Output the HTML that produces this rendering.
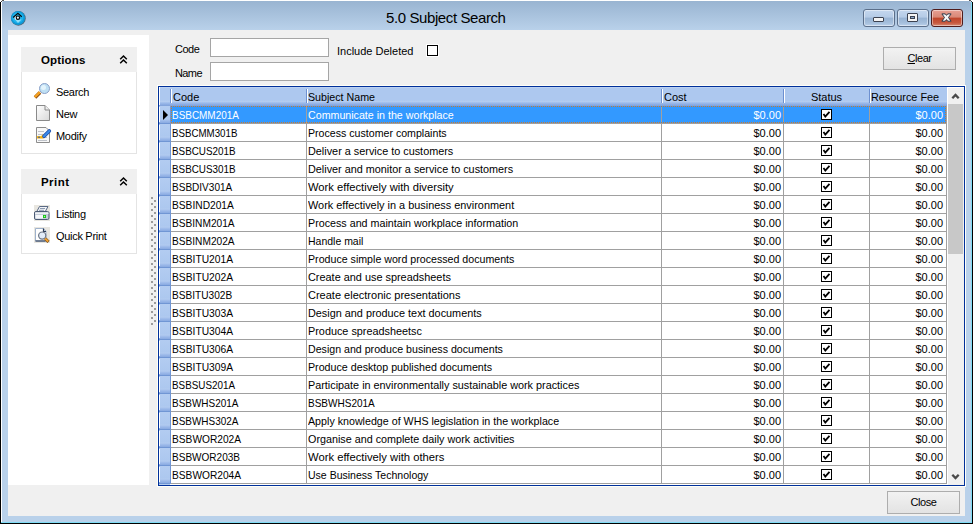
<!DOCTYPE html>
<html><head><meta charset="utf-8"><style>
*{margin:0;padding:0;box-sizing:border-box}
html,body{width:973px;height:524px;overflow:hidden;background:#fff;font-family:"Liberation Sans",sans-serif;font-size:11px;color:#000}
.a{position:absolute}
.t{position:absolute;white-space:pre;line-height:13px}
</style></head><body>
<div class="a" style="left:0;top:2px;width:1px;height:522px;background:#000"></div>
<div class="a" style="left:972px;top:2px;width:1px;height:522px;background:#000"></div>
<div class="a" style="left:0;top:523px;width:973px;height:1px;background:#000"></div>
<div class="a" style="left:2px;top:0;width:2px;height:1px;background:#555"></div>
<div class="a" style="left:1px;top:1px;width:1px;height:1px;background:#444"></div>
<div class="a" style="left:969px;top:0;width:2px;height:1px;background:#555"></div>
<div class="a" style="left:971px;top:1px;width:1px;height:1px;background:#444"></div>
<div class="a" style="left:1px;top:2px;width:1px;height:521px;background:#fff"></div>
<div class="a" style="left:971px;top:2px;width:1px;height:521px;background:#7fdcf5"></div>
<div class="a" style="left:1px;top:522px;width:971px;height:1px;background:#7fdcf5"></div>
<div class="a" style="left:2px;top:1px;width:969px;height:521px;background:#b9d1ea;border-radius:2px 2px 0 0"></div>
<div class="a" style="left:2px;top:1px;width:969px;height:29px;background:linear-gradient(#99b4d1,#b9d1ea);border-radius:2px 2px 0 0"></div>
<div class="t" style="left:386px;top:10px;font-size:15px;line-height:16px;letter-spacing:-0.4px;color:#000">5.0 Subject Search</div>
<svg class="a" style="left:10px;top:10px" width="17" height="17" viewBox="0 0 17 17"><circle cx="8.4" cy="8.4" r="7.3" fill="#2a3440" opacity=".7"/><circle cx="8" cy="8" r="7.1" fill="#0e9ad8"/><circle cx="7.8" cy="7.6" r="5.6" fill="#1eb2ec"/><path d="M5 9.6 L11.6 9.6 L8 13 Z" fill="#a8e4fa" opacity=".85"/><path d="M4.5 6.5 L7 6 L7 9.8 L4.8 9.6 Z" fill="#fff"/><path d="M3.1 7.5 L7.9 3.3 L11.8 6.8" fill="none" stroke="#0a0a0a" stroke-width="1.2"/><circle cx="7.9" cy="7.7" r="1.7" fill="#e8f6fc" stroke="#0a0a0a" stroke-width="1.2"/></svg>
<div class="a" style="left:863px;top:9px;width:32px;height:18px;border:1px solid #5b6f8a;border-radius:3px;background:linear-gradient(#c4d7ee 0%,#b5cbe6 45%,#98b3d3 50%,#a5bfdc 80%,#bad0ea 100%);box-shadow:inset 0 0 0 1px rgba(255,255,255,.45)"></div>
<div class="a" style="left:897px;top:9px;width:32px;height:18px;border:1px solid #5b6f8a;border-radius:3px;background:linear-gradient(#c4d7ee 0%,#b5cbe6 45%,#98b3d3 50%,#a5bfdc 80%,#bad0ea 100%);box-shadow:inset 0 0 0 1px rgba(255,255,255,.45)"></div>
<div class="a" style="left:931px;top:9px;width:32px;height:18px;border:1px solid #4f1c1c;border-radius:3px;background:linear-gradient(#e8a093 0%,#d98876 45%,#c0452a 50%,#c7583e 80%,#d68a73 100%);box-shadow:inset 0 0 0 1px rgba(255,255,255,.45)"></div>
<div class="a" style="left:873px;top:17px;width:11px;height:5px;background:#f4f4f4;border:1px solid #3c4250;border-radius:1px"></div>
<div class="a" style="left:907px;top:13px;width:11px;height:9px;background:#f4f4f4;border:1px solid #3c4250;border-radius:1px"></div>
<div class="a" style="left:910px;top:16px;width:5px;height:3px;background:#8da8c8;border:1px solid #3c4250"></div>
<svg class="a" style="left:940px;top:12px" width="14" height="11" viewBox="0 0 14 11"><path d="M1.9 1.9 L5.3 1.9 L6.5 3.4 L7.7 1.9 L11.1 1.9 L8.5 5.5 L11.1 9.2 L7.7 9.2 L6.5 7.6 L5.3 9.2 L1.9 9.2 L4.5 5.5 Z" fill="#f6f6f6" stroke="#2e3a4a" stroke-width="1" stroke-linejoin="round"/></svg>
<div class="a" style="left:8px;top:30px;width:957px;height:486px;background:#f0f0f0"></div>
<div class="a" style="left:8px;top:35px;width:141px;height:450px;background:#fff"></div>
<div class="a" style="left:21px;top:47px;width:116px;height:107px;background:#fff;border:1px solid #e4e4e4"></div>
<div class="a" style="left:21px;top:47px;width:116px;height:25px;background:#f0f0f0"></div>
<div class="t" style="left:41px;top:54px;font-weight:bold;font-size:11.5px;letter-spacing:0.15px">Options</div>
<svg class="a" style="left:119px;top:54px" width="9" height="11" viewBox="0 0 9 11"><path d="M1.2 5.2 L4.5 2 L7.8 5.2 M1.2 9.2 L4.5 6 L7.8 9.2" fill="none" stroke="#000" stroke-width="1.5"/></svg>
<div class="a" style="left:21px;top:169px;width:116px;height:85px;background:#fff;border:1px solid #e4e4e4"></div>
<div class="a" style="left:21px;top:169px;width:116px;height:25px;background:#f0f0f0"></div>
<div class="t" style="left:41px;top:176px;font-weight:bold;font-size:11.5px;letter-spacing:0.45px">Print</div>
<svg class="a" style="left:119px;top:176px" width="9" height="11" viewBox="0 0 9 11"><path d="M1.2 5.2 L4.5 2 L7.8 5.2 M1.2 9.2 L4.5 6 L7.8 9.2" fill="none" stroke="#000" stroke-width="1.5"/></svg>
<div class="t" style="left:56px;top:86px;letter-spacing:-0.3px">Search</div>
<div class="t" style="left:56px;top:108px;letter-spacing:-0.3px">New</div>
<div class="t" style="left:56px;top:130px;letter-spacing:-0.3px">Modify</div>
<div class="t" style="left:56px;top:208px;letter-spacing:-0.3px">Listing</div>
<div class="t" style="left:56px;top:230px;letter-spacing:-0.3px">Quick Print</div>
<svg class="a" style="left:33px;top:83px" width="18" height="17" viewBox="0 0 18 17"><path d="M2 14.5 L7 9.5" stroke="#8a4a10" stroke-width="3.6" stroke-linecap="butt"/><path d="M1.8 14.2 L6.8 9.2" stroke="#f4a020" stroke-width="2.4" stroke-linecap="butt"/><circle cx="11.5" cy="5.5" r="5" fill="#bfe0f4" stroke="#8aa0c8" stroke-width="1"/><circle cx="10.5" cy="4.5" r="2.5" fill="#e4f4fc"/></svg>
<svg class="a" style="left:36px;top:105px" width="14" height="16" viewBox="0 0 14 16"><defs><linearGradient id="pg" x1="0" y1="0" x2="1" y2="1"><stop offset="0" stop-color="#fff"/><stop offset="1" stop-color="#d8d8d8"/></linearGradient></defs><path d="M0.5 0.5 H9 L13.5 5 V15.5 H0.5 Z" fill="url(#pg)" stroke="#8a8a8a"/><path d="M9 0.5 V5 H13.5" fill="#eee" stroke="#8a8a8a"/></svg>
<svg class="a" style="left:33px;top:124px" width="20" height="22" viewBox="0 0 20 22"><path d="M3.5 3.5 H13 L16.5 7 V18.5 H3.5 Z" fill="#f8f8f8" stroke="#8c8c8c"/><path d="M5 7.5 H11 M5 10.5 H10 M5 16.5 H14 M11 13.5 H14" stroke="#b8bcc4" stroke-width="0.9"/><path d="M4 12 H8.5 L10 10 L11.5 11.5 L10.5 14.5 H4 Z" fill="#f6b010"/><path d="M4 12 H8 L9.5 11 V12.5 H4 Z" fill="#fcd040"/><rect x="5" y="12.7" width="2" height="1" fill="#3050a0"/><path d="M11 12.3 L16.3 7" stroke="#1848a8" stroke-width="3.6" stroke-linecap="round"/><path d="M11 12.3 L16.3 7" stroke="#3a8ae8" stroke-width="2.2" stroke-linecap="round"/></svg>
<svg class="a" style="left:32px;top:203px" width="20" height="20" viewBox="0 0 20 20"><rect x="2" y="2" width="16" height="16" fill="#e8e6e0"/><path d="M7.5 3.5 H16 L13 9 H4.5 Z" fill="#f2f4f8" stroke="#5a6a84" stroke-width="1"/><path d="M8 5.5 H13 M7 7.3 H12" stroke="#8090a8" stroke-width="0.9"/><rect x="2.5" y="8.5" width="14.5" height="8" rx="1.5" fill="#c4ccd8" stroke="#4a5a74"/><rect x="3" y="9.5" width="13.5" height="1.5" fill="#eef0f4"/><path d="M3.5 12 H11 V15.5 H3.5 Z" fill="#f4f6fa"/><rect x="11" y="12" width="3" height="3" fill="#18c018"/><circle cx="12.5" cy="13.5" r="0.7" fill="#a0ffa0"/></svg>
<svg class="a" style="left:32px;top:225px" width="20" height="20" viewBox="0 0 20 20"><rect x="2" y="2" width="16" height="16" fill="#e8e6e0"/><path d="M3.5 3.5 H11.5 L14 6 V16 H3.5 Z" fill="#fff" stroke="#9fb2cc" stroke-width="1"/><path d="M3.5 16 H13.5" stroke="#40506a" stroke-width="1.3"/><path d="M11.5 3.5 V6.5 H14" fill="#d0d8e4" stroke="#2a3a54" stroke-width="1.2"/><circle cx="10.2" cy="10.6" r="3.6" fill="#e2ecf8" stroke="#6a7484" stroke-width="1.2"/><path d="M13.2 13.6 L16.5 16.8" stroke="#6a4010" stroke-width="3"/><path d="M13.1 13.5 L16.2 16.5" stroke="#f0a030" stroke-width="2"/></svg>
<div class="a" style="left:151px;top:197px;width:2px;height:2px;background:#9a9a9a"></div>
<div class="a" style="left:151px;top:203px;width:2px;height:2px;background:#9a9a9a"></div>
<div class="a" style="left:151px;top:209px;width:2px;height:2px;background:#9a9a9a"></div>
<div class="a" style="left:151px;top:215px;width:2px;height:2px;background:#9a9a9a"></div>
<div class="a" style="left:151px;top:221px;width:2px;height:2px;background:#9a9a9a"></div>
<div class="a" style="left:151px;top:227px;width:2px;height:2px;background:#9a9a9a"></div>
<div class="a" style="left:151px;top:233px;width:2px;height:2px;background:#9a9a9a"></div>
<div class="a" style="left:151px;top:239px;width:2px;height:2px;background:#9a9a9a"></div>
<div class="a" style="left:151px;top:245px;width:2px;height:2px;background:#9a9a9a"></div>
<div class="a" style="left:151px;top:251px;width:2px;height:2px;background:#9a9a9a"></div>
<div class="a" style="left:151px;top:257px;width:2px;height:2px;background:#9a9a9a"></div>
<div class="a" style="left:151px;top:263px;width:2px;height:2px;background:#9a9a9a"></div>
<div class="a" style="left:151px;top:269px;width:2px;height:2px;background:#9a9a9a"></div>
<div class="a" style="left:151px;top:275px;width:2px;height:2px;background:#9a9a9a"></div>
<div class="a" style="left:151px;top:281px;width:2px;height:2px;background:#9a9a9a"></div>
<div class="a" style="left:151px;top:287px;width:2px;height:2px;background:#9a9a9a"></div>
<div class="a" style="left:151px;top:293px;width:2px;height:2px;background:#9a9a9a"></div>
<div class="a" style="left:151px;top:299px;width:2px;height:2px;background:#9a9a9a"></div>
<div class="a" style="left:151px;top:305px;width:2px;height:2px;background:#9a9a9a"></div>
<div class="a" style="left:151px;top:311px;width:2px;height:2px;background:#9a9a9a"></div>
<div class="a" style="left:151px;top:317px;width:2px;height:2px;background:#9a9a9a"></div>
<div class="a" style="left:151px;top:323px;width:2px;height:2px;background:#9a9a9a"></div>
<div class="a" style="left:154px;top:200px;width:2px;height:2px;background:#9a9a9a"></div>
<div class="a" style="left:154px;top:206px;width:2px;height:2px;background:#9a9a9a"></div>
<div class="a" style="left:154px;top:212px;width:2px;height:2px;background:#9a9a9a"></div>
<div class="a" style="left:154px;top:218px;width:2px;height:2px;background:#9a9a9a"></div>
<div class="a" style="left:154px;top:224px;width:2px;height:2px;background:#9a9a9a"></div>
<div class="a" style="left:154px;top:230px;width:2px;height:2px;background:#9a9a9a"></div>
<div class="a" style="left:154px;top:236px;width:2px;height:2px;background:#9a9a9a"></div>
<div class="a" style="left:154px;top:242px;width:2px;height:2px;background:#9a9a9a"></div>
<div class="a" style="left:154px;top:248px;width:2px;height:2px;background:#9a9a9a"></div>
<div class="a" style="left:154px;top:254px;width:2px;height:2px;background:#9a9a9a"></div>
<div class="a" style="left:154px;top:260px;width:2px;height:2px;background:#9a9a9a"></div>
<div class="a" style="left:154px;top:266px;width:2px;height:2px;background:#9a9a9a"></div>
<div class="a" style="left:154px;top:272px;width:2px;height:2px;background:#9a9a9a"></div>
<div class="a" style="left:154px;top:278px;width:2px;height:2px;background:#9a9a9a"></div>
<div class="a" style="left:154px;top:284px;width:2px;height:2px;background:#9a9a9a"></div>
<div class="a" style="left:154px;top:290px;width:2px;height:2px;background:#9a9a9a"></div>
<div class="a" style="left:154px;top:296px;width:2px;height:2px;background:#9a9a9a"></div>
<div class="a" style="left:154px;top:302px;width:2px;height:2px;background:#9a9a9a"></div>
<div class="a" style="left:154px;top:308px;width:2px;height:2px;background:#9a9a9a"></div>
<div class="a" style="left:154px;top:314px;width:2px;height:2px;background:#9a9a9a"></div>
<div class="a" style="left:154px;top:320px;width:2px;height:2px;background:#9a9a9a"></div>
<div class="t" style="left:175px;top:43px;letter-spacing:-0.5px">Code</div>
<div class="t" style="left:175px;top:67px;letter-spacing:-0.6px">Name</div>
<div class="a" style="left:210px;top:38px;width:119px;height:19px;background:#fff;border:1px solid #a5a5a5"></div>
<div class="a" style="left:210px;top:62px;width:119px;height:19px;background:#fff;border:1px solid #a5a5a5"></div>
<div class="t" style="left:337px;top:45px">Include Deleted</div>
<div class="a" style="left:426px;top:44px;width:13px;height:13px;background:#fff"></div>
<div class="a" style="left:427px;top:45px;width:11px;height:11px;background:#fff;border:1px solid #000"></div>
<div class="a" style="left:883px;top:47px;width:73px;height:23px;border:1px solid #adadad;background:linear-gradient(#f2f2f2,#e3e3e3)"></div>
<div class="t" style="left:883px;top:52px;width:73px;text-align:center;letter-spacing:-0.45px"><u>C</u>lear</div>
<div class="a" style="left:887px;top:491px;width:73px;height:23px;border:1px solid #adadad;background:linear-gradient(#f2f2f2,#e3e3e3)"></div>
<div class="t" style="left:887px;top:496px;width:73px;text-align:center;letter-spacing:-0.45px">Close</div>
<div class="a" style="left:157px;top:85px;width:809px;height:402px;background:#fffff8"></div>
<div class="a" style="left:158px;top:86px;width:807px;height:400px;background:#fff;border:1px solid #00309a"></div>
<div class="a" style="left:159px;top:87px;width:788px;height:18px;background:linear-gradient(#c2d6f4 0px,#adc8ef 1.5px,#adc8ef 13px,#b4ccf0 14.5px,#9dbbea 16px,#87a8e0 18px)"></div>
<div class="a" style="left:159px;top:105px;width:788px;height:1px;background:#84a5dc"></div>
<div class="a" style="left:159px;top:87px;width:1px;height:18px;background:#fff"></div>
<div class="a" style="left:170px;top:89px;width:1px;height:14px;background:#6d90d0"></div>
<div class="a" style="left:171px;top:89px;width:1px;height:14px;background:#fff"></div>
<div class="a" style="left:306px;top:89px;width:1px;height:14px;background:#6d90d0"></div>
<div class="a" style="left:307px;top:89px;width:1px;height:14px;background:#fff"></div>
<div class="a" style="left:661px;top:89px;width:1px;height:14px;background:#6d90d0"></div>
<div class="a" style="left:662px;top:89px;width:1px;height:14px;background:#fff"></div>
<div class="a" style="left:783px;top:89px;width:1px;height:14px;background:#6d90d0"></div>
<div class="a" style="left:784px;top:89px;width:1px;height:14px;background:#fff"></div>
<div class="a" style="left:869px;top:89px;width:1px;height:14px;background:#6d90d0"></div>
<div class="a" style="left:870px;top:89px;width:1px;height:14px;background:#fff"></div>
<div class="t" style="left:173px;top:91px">Code</div>
<div class="t" style="left:308px;top:91px;transform:scaleX(0.97);transform-origin:0 0">Subject Name</div>
<div class="t" style="left:664px;top:91px">Cost</div>
<div class="t" style="left:784px;top:91px;width:85px;text-align:center">Status</div>
<div class="t" style="left:871px;top:91px;transform:scaleX(0.985);transform-origin:0 0">Resource Fee</div>
<div class="a" style="left:159px;top:106px;width:11px;height:17px;background:linear-gradient(#b3ccf1 0px,#adc8ef 12px,#b2cbf0 13px,#9ab8e9 15px,#89aae1 17px)"></div>
<div class="a" style="left:159px;top:107px;width:1px;height:15px;background:#fff"></div>
<div class="a" style="left:159px;top:123px;width:12px;height:1px;background:#7096d4"></div>
<div class="a" style="left:170px;top:106px;width:1px;height:17px;background:#7096d4"></div>
<div class="a" style="left:171px;top:106px;width:776px;height:17px;background:#3399ff"></div>
<svg class="a" style="left:163px;top:110px" width="5" height="10" viewBox="0 0 5 10"><path d="M0 0 L5 5 L0 10 Z" fill="#000"/></svg>
<div class="a" style="left:171px;top:123px;width:776px;height:1px;background:#a0a0a0"></div>
<div class="a" style="left:306px;top:106px;width:1px;height:18px;background:#a0a0a0"></div>
<div class="a" style="left:661px;top:106px;width:1px;height:18px;background:#a0a0a0"></div>
<div class="a" style="left:783px;top:106px;width:1px;height:18px;background:#a0a0a0"></div>
<div class="a" style="left:869px;top:106px;width:1px;height:18px;background:#a0a0a0"></div>
<div class="a" style="left:946px;top:106px;width:1px;height:18px;background:#a0a0a0"></div>
<div class="t" style="left:172px;top:109px;color:#fff;transform:scaleX(0.904);transform-origin:0 0">BSBCMM201A</div>
<div class="t" style="left:308px;top:109px;color:#fff;transform:scaleX(0.969);transform-origin:0 0">Communicate in the workplace</div>
<div class="t" style="left:661px;top:109px;width:120px;text-align:right;color:#fff">$0.00</div>
<div class="t" style="left:869px;top:109px;width:74px;text-align:right;color:#fff">$0.00</div>
<svg class="a" style="left:821px;top:109px" width="11" height="11" viewBox="0 0 11 11"><rect x="0.5" y="0.5" width="10" height="10" fill="#fff" stroke="#000"/><path d="M2.5 5 L4.3 7.5 L8.5 2.8" fill="none" stroke="#000" stroke-width="1.8"/></svg>
<div class="a" style="left:171px;top:106px;width:776px;height:1px;background:repeating-linear-gradient(90deg,#c87a30 0 1px,transparent 1px 2px)"></div>
<div class="a" style="left:171px;top:122px;width:776px;height:1px;background:repeating-linear-gradient(90deg,#c87a30 0 1px,transparent 1px 2px)"></div>
<div class="a" style="left:171px;top:106px;width:1px;height:17px;background:repeating-linear-gradient(180deg,#c87a30 0 1px,transparent 1px 2px)"></div>
<div class="a" style="left:945px;top:106px;width:1px;height:17px;background:repeating-linear-gradient(180deg,#c87a30 0 1px,transparent 1px 2px)"></div>
<div class="a" style="left:159px;top:124px;width:11px;height:17px;background:linear-gradient(#b3ccf1 0px,#adc8ef 12px,#b2cbf0 13px,#9ab8e9 15px,#89aae1 17px)"></div>
<div class="a" style="left:159px;top:125px;width:1px;height:15px;background:#fff"></div>
<div class="a" style="left:159px;top:141px;width:12px;height:1px;background:#7096d4"></div>
<div class="a" style="left:170px;top:124px;width:1px;height:17px;background:#7096d4"></div>
<div class="a" style="left:171px;top:141px;width:776px;height:1px;background:#a0a0a0"></div>
<div class="a" style="left:306px;top:124px;width:1px;height:18px;background:#a0a0a0"></div>
<div class="a" style="left:661px;top:124px;width:1px;height:18px;background:#a0a0a0"></div>
<div class="a" style="left:783px;top:124px;width:1px;height:18px;background:#a0a0a0"></div>
<div class="a" style="left:869px;top:124px;width:1px;height:18px;background:#a0a0a0"></div>
<div class="a" style="left:946px;top:124px;width:1px;height:18px;background:#a0a0a0"></div>
<div class="t" style="left:172px;top:127px;color:#000;transform:scaleX(0.884);transform-origin:0 0">BSBCMM301B</div>
<div class="t" style="left:308px;top:127px;color:#000;transform:scaleX(0.965);transform-origin:0 0">Process customer complaints</div>
<div class="t" style="left:661px;top:127px;width:120px;text-align:right;color:#000">$0.00</div>
<div class="t" style="left:869px;top:127px;width:74px;text-align:right;color:#000">$0.00</div>
<svg class="a" style="left:821px;top:127px" width="11" height="11" viewBox="0 0 11 11"><rect x="0.5" y="0.5" width="10" height="10" fill="#fff" stroke="#000"/><path d="M2.5 5 L4.3 7.5 L8.5 2.8" fill="none" stroke="#000" stroke-width="1.8"/></svg>
<div class="a" style="left:159px;top:142px;width:11px;height:17px;background:linear-gradient(#b3ccf1 0px,#adc8ef 12px,#b2cbf0 13px,#9ab8e9 15px,#89aae1 17px)"></div>
<div class="a" style="left:159px;top:143px;width:1px;height:15px;background:#fff"></div>
<div class="a" style="left:159px;top:159px;width:12px;height:1px;background:#7096d4"></div>
<div class="a" style="left:170px;top:142px;width:1px;height:17px;background:#7096d4"></div>
<div class="a" style="left:171px;top:159px;width:776px;height:1px;background:#a0a0a0"></div>
<div class="a" style="left:306px;top:142px;width:1px;height:18px;background:#a0a0a0"></div>
<div class="a" style="left:661px;top:142px;width:1px;height:18px;background:#a0a0a0"></div>
<div class="a" style="left:783px;top:142px;width:1px;height:18px;background:#a0a0a0"></div>
<div class="a" style="left:869px;top:142px;width:1px;height:18px;background:#a0a0a0"></div>
<div class="a" style="left:946px;top:142px;width:1px;height:18px;background:#a0a0a0"></div>
<div class="t" style="left:172px;top:145px;color:#000;transform:scaleX(0.896);transform-origin:0 0">BSBCUS201B</div>
<div class="t" style="left:308px;top:145px;color:#000;transform:scaleX(0.986);transform-origin:0 0">Deliver a service to customers</div>
<div class="t" style="left:661px;top:145px;width:120px;text-align:right;color:#000">$0.00</div>
<div class="t" style="left:869px;top:145px;width:74px;text-align:right;color:#000">$0.00</div>
<svg class="a" style="left:821px;top:145px" width="11" height="11" viewBox="0 0 11 11"><rect x="0.5" y="0.5" width="10" height="10" fill="#fff" stroke="#000"/><path d="M2.5 5 L4.3 7.5 L8.5 2.8" fill="none" stroke="#000" stroke-width="1.8"/></svg>
<div class="a" style="left:159px;top:160px;width:11px;height:17px;background:linear-gradient(#b3ccf1 0px,#adc8ef 12px,#b2cbf0 13px,#9ab8e9 15px,#89aae1 17px)"></div>
<div class="a" style="left:159px;top:161px;width:1px;height:15px;background:#fff"></div>
<div class="a" style="left:159px;top:177px;width:12px;height:1px;background:#7096d4"></div>
<div class="a" style="left:170px;top:160px;width:1px;height:17px;background:#7096d4"></div>
<div class="a" style="left:171px;top:177px;width:776px;height:1px;background:#a0a0a0"></div>
<div class="a" style="left:306px;top:160px;width:1px;height:18px;background:#a0a0a0"></div>
<div class="a" style="left:661px;top:160px;width:1px;height:18px;background:#a0a0a0"></div>
<div class="a" style="left:783px;top:160px;width:1px;height:18px;background:#a0a0a0"></div>
<div class="a" style="left:869px;top:160px;width:1px;height:18px;background:#a0a0a0"></div>
<div class="a" style="left:946px;top:160px;width:1px;height:18px;background:#a0a0a0"></div>
<div class="t" style="left:172px;top:163px;color:#000;transform:scaleX(0.896);transform-origin:0 0">BSBCUS301B</div>
<div class="t" style="left:308px;top:163px;color:#000;transform:scaleX(0.984);transform-origin:0 0">Deliver and monitor a service to customers</div>
<div class="t" style="left:661px;top:163px;width:120px;text-align:right;color:#000">$0.00</div>
<div class="t" style="left:869px;top:163px;width:74px;text-align:right;color:#000">$0.00</div>
<svg class="a" style="left:821px;top:163px" width="11" height="11" viewBox="0 0 11 11"><rect x="0.5" y="0.5" width="10" height="10" fill="#fff" stroke="#000"/><path d="M2.5 5 L4.3 7.5 L8.5 2.8" fill="none" stroke="#000" stroke-width="1.8"/></svg>
<div class="a" style="left:159px;top:178px;width:11px;height:17px;background:linear-gradient(#b3ccf1 0px,#adc8ef 12px,#b2cbf0 13px,#9ab8e9 15px,#89aae1 17px)"></div>
<div class="a" style="left:159px;top:179px;width:1px;height:15px;background:#fff"></div>
<div class="a" style="left:159px;top:195px;width:12px;height:1px;background:#7096d4"></div>
<div class="a" style="left:170px;top:178px;width:1px;height:17px;background:#7096d4"></div>
<div class="a" style="left:171px;top:195px;width:776px;height:1px;background:#a0a0a0"></div>
<div class="a" style="left:306px;top:178px;width:1px;height:18px;background:#a0a0a0"></div>
<div class="a" style="left:661px;top:178px;width:1px;height:18px;background:#a0a0a0"></div>
<div class="a" style="left:783px;top:178px;width:1px;height:18px;background:#a0a0a0"></div>
<div class="a" style="left:869px;top:178px;width:1px;height:18px;background:#a0a0a0"></div>
<div class="a" style="left:946px;top:178px;width:1px;height:18px;background:#a0a0a0"></div>
<div class="t" style="left:172px;top:181px;color:#000;transform:scaleX(0.912);transform-origin:0 0">BSBDIV301A</div>
<div class="t" style="left:308px;top:181px;color:#000;transform:scaleX(1.017);transform-origin:0 0">Work effectively with diversity</div>
<div class="t" style="left:661px;top:181px;width:120px;text-align:right;color:#000">$0.00</div>
<div class="t" style="left:869px;top:181px;width:74px;text-align:right;color:#000">$0.00</div>
<svg class="a" style="left:821px;top:181px" width="11" height="11" viewBox="0 0 11 11"><rect x="0.5" y="0.5" width="10" height="10" fill="#fff" stroke="#000"/><path d="M2.5 5 L4.3 7.5 L8.5 2.8" fill="none" stroke="#000" stroke-width="1.8"/></svg>
<div class="a" style="left:159px;top:196px;width:11px;height:17px;background:linear-gradient(#b3ccf1 0px,#adc8ef 12px,#b2cbf0 13px,#9ab8e9 15px,#89aae1 17px)"></div>
<div class="a" style="left:159px;top:197px;width:1px;height:15px;background:#fff"></div>
<div class="a" style="left:159px;top:213px;width:12px;height:1px;background:#7096d4"></div>
<div class="a" style="left:170px;top:196px;width:1px;height:17px;background:#7096d4"></div>
<div class="a" style="left:171px;top:213px;width:776px;height:1px;background:#a0a0a0"></div>
<div class="a" style="left:306px;top:196px;width:1px;height:18px;background:#a0a0a0"></div>
<div class="a" style="left:661px;top:196px;width:1px;height:18px;background:#a0a0a0"></div>
<div class="a" style="left:783px;top:196px;width:1px;height:18px;background:#a0a0a0"></div>
<div class="a" style="left:869px;top:196px;width:1px;height:18px;background:#a0a0a0"></div>
<div class="a" style="left:946px;top:196px;width:1px;height:18px;background:#a0a0a0"></div>
<div class="t" style="left:172px;top:199px;color:#000;transform:scaleX(0.928);transform-origin:0 0">BSBIND201A</div>
<div class="t" style="left:308px;top:199px;color:#000;transform:scaleX(0.991);transform-origin:0 0">Work effectively in a business environment</div>
<div class="t" style="left:661px;top:199px;width:120px;text-align:right;color:#000">$0.00</div>
<div class="t" style="left:869px;top:199px;width:74px;text-align:right;color:#000">$0.00</div>
<svg class="a" style="left:821px;top:199px" width="11" height="11" viewBox="0 0 11 11"><rect x="0.5" y="0.5" width="10" height="10" fill="#fff" stroke="#000"/><path d="M2.5 5 L4.3 7.5 L8.5 2.8" fill="none" stroke="#000" stroke-width="1.8"/></svg>
<div class="a" style="left:159px;top:214px;width:11px;height:17px;background:linear-gradient(#b3ccf1 0px,#adc8ef 12px,#b2cbf0 13px,#9ab8e9 15px,#89aae1 17px)"></div>
<div class="a" style="left:159px;top:215px;width:1px;height:15px;background:#fff"></div>
<div class="a" style="left:159px;top:231px;width:12px;height:1px;background:#7096d4"></div>
<div class="a" style="left:170px;top:214px;width:1px;height:17px;background:#7096d4"></div>
<div class="a" style="left:171px;top:231px;width:776px;height:1px;background:#a0a0a0"></div>
<div class="a" style="left:306px;top:214px;width:1px;height:18px;background:#a0a0a0"></div>
<div class="a" style="left:661px;top:214px;width:1px;height:18px;background:#a0a0a0"></div>
<div class="a" style="left:783px;top:214px;width:1px;height:18px;background:#a0a0a0"></div>
<div class="a" style="left:869px;top:214px;width:1px;height:18px;background:#a0a0a0"></div>
<div class="a" style="left:946px;top:214px;width:1px;height:18px;background:#a0a0a0"></div>
<div class="t" style="left:172px;top:217px;color:#000;transform:scaleX(0.922);transform-origin:0 0">BSBINM201A</div>
<div class="t" style="left:308px;top:217px;color:#000;transform:scaleX(0.974);transform-origin:0 0">Process and maintain workplace information</div>
<div class="t" style="left:661px;top:217px;width:120px;text-align:right;color:#000">$0.00</div>
<div class="t" style="left:869px;top:217px;width:74px;text-align:right;color:#000">$0.00</div>
<svg class="a" style="left:821px;top:217px" width="11" height="11" viewBox="0 0 11 11"><rect x="0.5" y="0.5" width="10" height="10" fill="#fff" stroke="#000"/><path d="M2.5 5 L4.3 7.5 L8.5 2.8" fill="none" stroke="#000" stroke-width="1.8"/></svg>
<div class="a" style="left:159px;top:232px;width:11px;height:17px;background:linear-gradient(#b3ccf1 0px,#adc8ef 12px,#b2cbf0 13px,#9ab8e9 15px,#89aae1 17px)"></div>
<div class="a" style="left:159px;top:233px;width:1px;height:15px;background:#fff"></div>
<div class="a" style="left:159px;top:249px;width:12px;height:1px;background:#7096d4"></div>
<div class="a" style="left:170px;top:232px;width:1px;height:17px;background:#7096d4"></div>
<div class="a" style="left:171px;top:249px;width:776px;height:1px;background:#a0a0a0"></div>
<div class="a" style="left:306px;top:232px;width:1px;height:18px;background:#a0a0a0"></div>
<div class="a" style="left:661px;top:232px;width:1px;height:18px;background:#a0a0a0"></div>
<div class="a" style="left:783px;top:232px;width:1px;height:18px;background:#a0a0a0"></div>
<div class="a" style="left:869px;top:232px;width:1px;height:18px;background:#a0a0a0"></div>
<div class="a" style="left:946px;top:232px;width:1px;height:18px;background:#a0a0a0"></div>
<div class="t" style="left:172px;top:235px;color:#000;transform:scaleX(0.922);transform-origin:0 0">BSBINM202A</div>
<div class="t" style="left:308px;top:235px;color:#000;transform:scaleX(0.953);transform-origin:0 0">Handle mail</div>
<div class="t" style="left:661px;top:235px;width:120px;text-align:right;color:#000">$0.00</div>
<div class="t" style="left:869px;top:235px;width:74px;text-align:right;color:#000">$0.00</div>
<svg class="a" style="left:821px;top:235px" width="11" height="11" viewBox="0 0 11 11"><rect x="0.5" y="0.5" width="10" height="10" fill="#fff" stroke="#000"/><path d="M2.5 5 L4.3 7.5 L8.5 2.8" fill="none" stroke="#000" stroke-width="1.8"/></svg>
<div class="a" style="left:159px;top:250px;width:11px;height:17px;background:linear-gradient(#b3ccf1 0px,#adc8ef 12px,#b2cbf0 13px,#9ab8e9 15px,#89aae1 17px)"></div>
<div class="a" style="left:159px;top:251px;width:1px;height:15px;background:#fff"></div>
<div class="a" style="left:159px;top:267px;width:12px;height:1px;background:#7096d4"></div>
<div class="a" style="left:170px;top:250px;width:1px;height:17px;background:#7096d4"></div>
<div class="a" style="left:171px;top:267px;width:776px;height:1px;background:#a0a0a0"></div>
<div class="a" style="left:306px;top:250px;width:1px;height:18px;background:#a0a0a0"></div>
<div class="a" style="left:661px;top:250px;width:1px;height:18px;background:#a0a0a0"></div>
<div class="a" style="left:783px;top:250px;width:1px;height:18px;background:#a0a0a0"></div>
<div class="a" style="left:869px;top:250px;width:1px;height:18px;background:#a0a0a0"></div>
<div class="a" style="left:946px;top:250px;width:1px;height:18px;background:#a0a0a0"></div>
<div class="t" style="left:172px;top:253px;color:#000;transform:scaleX(0.933);transform-origin:0 0">BSBITU201A</div>
<div class="t" style="left:308px;top:253px;color:#000;transform:scaleX(0.967);transform-origin:0 0">Produce simple word processed documents</div>
<div class="t" style="left:661px;top:253px;width:120px;text-align:right;color:#000">$0.00</div>
<div class="t" style="left:869px;top:253px;width:74px;text-align:right;color:#000">$0.00</div>
<svg class="a" style="left:821px;top:253px" width="11" height="11" viewBox="0 0 11 11"><rect x="0.5" y="0.5" width="10" height="10" fill="#fff" stroke="#000"/><path d="M2.5 5 L4.3 7.5 L8.5 2.8" fill="none" stroke="#000" stroke-width="1.8"/></svg>
<div class="a" style="left:159px;top:268px;width:11px;height:17px;background:linear-gradient(#b3ccf1 0px,#adc8ef 12px,#b2cbf0 13px,#9ab8e9 15px,#89aae1 17px)"></div>
<div class="a" style="left:159px;top:269px;width:1px;height:15px;background:#fff"></div>
<div class="a" style="left:159px;top:285px;width:12px;height:1px;background:#7096d4"></div>
<div class="a" style="left:170px;top:268px;width:1px;height:17px;background:#7096d4"></div>
<div class="a" style="left:171px;top:285px;width:776px;height:1px;background:#a0a0a0"></div>
<div class="a" style="left:306px;top:268px;width:1px;height:18px;background:#a0a0a0"></div>
<div class="a" style="left:661px;top:268px;width:1px;height:18px;background:#a0a0a0"></div>
<div class="a" style="left:783px;top:268px;width:1px;height:18px;background:#a0a0a0"></div>
<div class="a" style="left:869px;top:268px;width:1px;height:18px;background:#a0a0a0"></div>
<div class="a" style="left:946px;top:268px;width:1px;height:18px;background:#a0a0a0"></div>
<div class="t" style="left:172px;top:271px;color:#000;transform:scaleX(0.933);transform-origin:0 0">BSBITU202A</div>
<div class="t" style="left:308px;top:271px;color:#000;transform:scaleX(0.99);transform-origin:0 0">Create and use spreadsheets</div>
<div class="t" style="left:661px;top:271px;width:120px;text-align:right;color:#000">$0.00</div>
<div class="t" style="left:869px;top:271px;width:74px;text-align:right;color:#000">$0.00</div>
<svg class="a" style="left:821px;top:271px" width="11" height="11" viewBox="0 0 11 11"><rect x="0.5" y="0.5" width="10" height="10" fill="#fff" stroke="#000"/><path d="M2.5 5 L4.3 7.5 L8.5 2.8" fill="none" stroke="#000" stroke-width="1.8"/></svg>
<div class="a" style="left:159px;top:286px;width:11px;height:17px;background:linear-gradient(#b3ccf1 0px,#adc8ef 12px,#b2cbf0 13px,#9ab8e9 15px,#89aae1 17px)"></div>
<div class="a" style="left:159px;top:287px;width:1px;height:15px;background:#fff"></div>
<div class="a" style="left:159px;top:303px;width:12px;height:1px;background:#7096d4"></div>
<div class="a" style="left:170px;top:286px;width:1px;height:17px;background:#7096d4"></div>
<div class="a" style="left:171px;top:303px;width:776px;height:1px;background:#a0a0a0"></div>
<div class="a" style="left:306px;top:286px;width:1px;height:18px;background:#a0a0a0"></div>
<div class="a" style="left:661px;top:286px;width:1px;height:18px;background:#a0a0a0"></div>
<div class="a" style="left:783px;top:286px;width:1px;height:18px;background:#a0a0a0"></div>
<div class="a" style="left:869px;top:286px;width:1px;height:18px;background:#a0a0a0"></div>
<div class="a" style="left:946px;top:286px;width:1px;height:18px;background:#a0a0a0"></div>
<div class="t" style="left:172px;top:289px;color:#000;transform:scaleX(0.92);transform-origin:0 0">BSBITU302B</div>
<div class="t" style="left:308px;top:289px;color:#000;transform:scaleX(1.001);transform-origin:0 0">Create electronic presentations</div>
<div class="t" style="left:661px;top:289px;width:120px;text-align:right;color:#000">$0.00</div>
<div class="t" style="left:869px;top:289px;width:74px;text-align:right;color:#000">$0.00</div>
<svg class="a" style="left:821px;top:289px" width="11" height="11" viewBox="0 0 11 11"><rect x="0.5" y="0.5" width="10" height="10" fill="#fff" stroke="#000"/><path d="M2.5 5 L4.3 7.5 L8.5 2.8" fill="none" stroke="#000" stroke-width="1.8"/></svg>
<div class="a" style="left:159px;top:304px;width:11px;height:17px;background:linear-gradient(#b3ccf1 0px,#adc8ef 12px,#b2cbf0 13px,#9ab8e9 15px,#89aae1 17px)"></div>
<div class="a" style="left:159px;top:305px;width:1px;height:15px;background:#fff"></div>
<div class="a" style="left:159px;top:321px;width:12px;height:1px;background:#7096d4"></div>
<div class="a" style="left:170px;top:304px;width:1px;height:17px;background:#7096d4"></div>
<div class="a" style="left:171px;top:321px;width:776px;height:1px;background:#a0a0a0"></div>
<div class="a" style="left:306px;top:304px;width:1px;height:18px;background:#a0a0a0"></div>
<div class="a" style="left:661px;top:304px;width:1px;height:18px;background:#a0a0a0"></div>
<div class="a" style="left:783px;top:304px;width:1px;height:18px;background:#a0a0a0"></div>
<div class="a" style="left:869px;top:304px;width:1px;height:18px;background:#a0a0a0"></div>
<div class="a" style="left:946px;top:304px;width:1px;height:18px;background:#a0a0a0"></div>
<div class="t" style="left:172px;top:307px;color:#000;transform:scaleX(0.933);transform-origin:0 0">BSBITU303A</div>
<div class="t" style="left:308px;top:307px;color:#000;transform:scaleX(0.986);transform-origin:0 0">Design and produce text documents</div>
<div class="t" style="left:661px;top:307px;width:120px;text-align:right;color:#000">$0.00</div>
<div class="t" style="left:869px;top:307px;width:74px;text-align:right;color:#000">$0.00</div>
<svg class="a" style="left:821px;top:307px" width="11" height="11" viewBox="0 0 11 11"><rect x="0.5" y="0.5" width="10" height="10" fill="#fff" stroke="#000"/><path d="M2.5 5 L4.3 7.5 L8.5 2.8" fill="none" stroke="#000" stroke-width="1.8"/></svg>
<div class="a" style="left:159px;top:322px;width:11px;height:17px;background:linear-gradient(#b3ccf1 0px,#adc8ef 12px,#b2cbf0 13px,#9ab8e9 15px,#89aae1 17px)"></div>
<div class="a" style="left:159px;top:323px;width:1px;height:15px;background:#fff"></div>
<div class="a" style="left:159px;top:339px;width:12px;height:1px;background:#7096d4"></div>
<div class="a" style="left:170px;top:322px;width:1px;height:17px;background:#7096d4"></div>
<div class="a" style="left:171px;top:339px;width:776px;height:1px;background:#a0a0a0"></div>
<div class="a" style="left:306px;top:322px;width:1px;height:18px;background:#a0a0a0"></div>
<div class="a" style="left:661px;top:322px;width:1px;height:18px;background:#a0a0a0"></div>
<div class="a" style="left:783px;top:322px;width:1px;height:18px;background:#a0a0a0"></div>
<div class="a" style="left:869px;top:322px;width:1px;height:18px;background:#a0a0a0"></div>
<div class="a" style="left:946px;top:322px;width:1px;height:18px;background:#a0a0a0"></div>
<div class="t" style="left:172px;top:325px;color:#000;transform:scaleX(0.933);transform-origin:0 0">BSBITU304A</div>
<div class="t" style="left:308px;top:325px;color:#000;transform:scaleX(0.986);transform-origin:0 0">Produce spreadsheetsc</div>
<div class="t" style="left:661px;top:325px;width:120px;text-align:right;color:#000">$0.00</div>
<div class="t" style="left:869px;top:325px;width:74px;text-align:right;color:#000">$0.00</div>
<svg class="a" style="left:821px;top:325px" width="11" height="11" viewBox="0 0 11 11"><rect x="0.5" y="0.5" width="10" height="10" fill="#fff" stroke="#000"/><path d="M2.5 5 L4.3 7.5 L8.5 2.8" fill="none" stroke="#000" stroke-width="1.8"/></svg>
<div class="a" style="left:159px;top:340px;width:11px;height:17px;background:linear-gradient(#b3ccf1 0px,#adc8ef 12px,#b2cbf0 13px,#9ab8e9 15px,#89aae1 17px)"></div>
<div class="a" style="left:159px;top:341px;width:1px;height:15px;background:#fff"></div>
<div class="a" style="left:159px;top:357px;width:12px;height:1px;background:#7096d4"></div>
<div class="a" style="left:170px;top:340px;width:1px;height:17px;background:#7096d4"></div>
<div class="a" style="left:171px;top:357px;width:776px;height:1px;background:#a0a0a0"></div>
<div class="a" style="left:306px;top:340px;width:1px;height:18px;background:#a0a0a0"></div>
<div class="a" style="left:661px;top:340px;width:1px;height:18px;background:#a0a0a0"></div>
<div class="a" style="left:783px;top:340px;width:1px;height:18px;background:#a0a0a0"></div>
<div class="a" style="left:869px;top:340px;width:1px;height:18px;background:#a0a0a0"></div>
<div class="a" style="left:946px;top:340px;width:1px;height:18px;background:#a0a0a0"></div>
<div class="t" style="left:172px;top:343px;color:#000;transform:scaleX(0.933);transform-origin:0 0">BSBITU306A</div>
<div class="t" style="left:308px;top:343px;color:#000;transform:scaleX(0.966);transform-origin:0 0">Design and produce business documents</div>
<div class="t" style="left:661px;top:343px;width:120px;text-align:right;color:#000">$0.00</div>
<div class="t" style="left:869px;top:343px;width:74px;text-align:right;color:#000">$0.00</div>
<svg class="a" style="left:821px;top:343px" width="11" height="11" viewBox="0 0 11 11"><rect x="0.5" y="0.5" width="10" height="10" fill="#fff" stroke="#000"/><path d="M2.5 5 L4.3 7.5 L8.5 2.8" fill="none" stroke="#000" stroke-width="1.8"/></svg>
<div class="a" style="left:159px;top:358px;width:11px;height:17px;background:linear-gradient(#b3ccf1 0px,#adc8ef 12px,#b2cbf0 13px,#9ab8e9 15px,#89aae1 17px)"></div>
<div class="a" style="left:159px;top:359px;width:1px;height:15px;background:#fff"></div>
<div class="a" style="left:159px;top:375px;width:12px;height:1px;background:#7096d4"></div>
<div class="a" style="left:170px;top:358px;width:1px;height:17px;background:#7096d4"></div>
<div class="a" style="left:171px;top:375px;width:776px;height:1px;background:#a0a0a0"></div>
<div class="a" style="left:306px;top:358px;width:1px;height:18px;background:#a0a0a0"></div>
<div class="a" style="left:661px;top:358px;width:1px;height:18px;background:#a0a0a0"></div>
<div class="a" style="left:783px;top:358px;width:1px;height:18px;background:#a0a0a0"></div>
<div class="a" style="left:869px;top:358px;width:1px;height:18px;background:#a0a0a0"></div>
<div class="a" style="left:946px;top:358px;width:1px;height:18px;background:#a0a0a0"></div>
<div class="t" style="left:172px;top:361px;color:#000;transform:scaleX(0.933);transform-origin:0 0">BSBITU309A</div>
<div class="t" style="left:308px;top:361px;color:#000;transform:scaleX(0.971);transform-origin:0 0">Produce desktop published documents</div>
<div class="t" style="left:661px;top:361px;width:120px;text-align:right;color:#000">$0.00</div>
<div class="t" style="left:869px;top:361px;width:74px;text-align:right;color:#000">$0.00</div>
<svg class="a" style="left:821px;top:361px" width="11" height="11" viewBox="0 0 11 11"><rect x="0.5" y="0.5" width="10" height="10" fill="#fff" stroke="#000"/><path d="M2.5 5 L4.3 7.5 L8.5 2.8" fill="none" stroke="#000" stroke-width="1.8"/></svg>
<div class="a" style="left:159px;top:376px;width:11px;height:17px;background:linear-gradient(#b3ccf1 0px,#adc8ef 12px,#b2cbf0 13px,#9ab8e9 15px,#89aae1 17px)"></div>
<div class="a" style="left:159px;top:377px;width:1px;height:15px;background:#fff"></div>
<div class="a" style="left:159px;top:393px;width:12px;height:1px;background:#7096d4"></div>
<div class="a" style="left:170px;top:376px;width:1px;height:17px;background:#7096d4"></div>
<div class="a" style="left:171px;top:393px;width:776px;height:1px;background:#a0a0a0"></div>
<div class="a" style="left:306px;top:376px;width:1px;height:18px;background:#a0a0a0"></div>
<div class="a" style="left:661px;top:376px;width:1px;height:18px;background:#a0a0a0"></div>
<div class="a" style="left:783px;top:376px;width:1px;height:18px;background:#a0a0a0"></div>
<div class="a" style="left:869px;top:376px;width:1px;height:18px;background:#a0a0a0"></div>
<div class="a" style="left:946px;top:376px;width:1px;height:18px;background:#a0a0a0"></div>
<div class="t" style="left:172px;top:379px;color:#000;transform:scaleX(0.896);transform-origin:0 0">BSBSUS201A</div>
<div class="t" style="left:308px;top:379px;color:#000;transform:scaleX(0.984);transform-origin:0 0">Participate in environmentally sustainable work practices</div>
<div class="t" style="left:661px;top:379px;width:120px;text-align:right;color:#000">$0.00</div>
<div class="t" style="left:869px;top:379px;width:74px;text-align:right;color:#000">$0.00</div>
<svg class="a" style="left:821px;top:379px" width="11" height="11" viewBox="0 0 11 11"><rect x="0.5" y="0.5" width="10" height="10" fill="#fff" stroke="#000"/><path d="M2.5 5 L4.3 7.5 L8.5 2.8" fill="none" stroke="#000" stroke-width="1.8"/></svg>
<div class="a" style="left:159px;top:394px;width:11px;height:17px;background:linear-gradient(#b3ccf1 0px,#adc8ef 12px,#b2cbf0 13px,#9ab8e9 15px,#89aae1 17px)"></div>
<div class="a" style="left:159px;top:395px;width:1px;height:15px;background:#fff"></div>
<div class="a" style="left:159px;top:411px;width:12px;height:1px;background:#7096d4"></div>
<div class="a" style="left:170px;top:394px;width:1px;height:17px;background:#7096d4"></div>
<div class="a" style="left:171px;top:411px;width:776px;height:1px;background:#a0a0a0"></div>
<div class="a" style="left:306px;top:394px;width:1px;height:18px;background:#a0a0a0"></div>
<div class="a" style="left:661px;top:394px;width:1px;height:18px;background:#a0a0a0"></div>
<div class="a" style="left:783px;top:394px;width:1px;height:18px;background:#a0a0a0"></div>
<div class="a" style="left:869px;top:394px;width:1px;height:18px;background:#a0a0a0"></div>
<div class="a" style="left:946px;top:394px;width:1px;height:18px;background:#a0a0a0"></div>
<div class="t" style="left:172px;top:397px;color:#000;transform:scaleX(0.906);transform-origin:0 0">BSBWHS201A</div>
<div class="t" style="left:308px;top:397px;color:#000;transform:scaleX(0.91);transform-origin:0 0">BSBWHS201A</div>
<div class="t" style="left:661px;top:397px;width:120px;text-align:right;color:#000">$0.00</div>
<div class="t" style="left:869px;top:397px;width:74px;text-align:right;color:#000">$0.00</div>
<svg class="a" style="left:821px;top:397px" width="11" height="11" viewBox="0 0 11 11"><rect x="0.5" y="0.5" width="10" height="10" fill="#fff" stroke="#000"/><path d="M2.5 5 L4.3 7.5 L8.5 2.8" fill="none" stroke="#000" stroke-width="1.8"/></svg>
<div class="a" style="left:159px;top:412px;width:11px;height:17px;background:linear-gradient(#b3ccf1 0px,#adc8ef 12px,#b2cbf0 13px,#9ab8e9 15px,#89aae1 17px)"></div>
<div class="a" style="left:159px;top:413px;width:1px;height:15px;background:#fff"></div>
<div class="a" style="left:159px;top:429px;width:12px;height:1px;background:#7096d4"></div>
<div class="a" style="left:170px;top:412px;width:1px;height:17px;background:#7096d4"></div>
<div class="a" style="left:171px;top:429px;width:776px;height:1px;background:#a0a0a0"></div>
<div class="a" style="left:306px;top:412px;width:1px;height:18px;background:#a0a0a0"></div>
<div class="a" style="left:661px;top:412px;width:1px;height:18px;background:#a0a0a0"></div>
<div class="a" style="left:783px;top:412px;width:1px;height:18px;background:#a0a0a0"></div>
<div class="a" style="left:869px;top:412px;width:1px;height:18px;background:#a0a0a0"></div>
<div class="a" style="left:946px;top:412px;width:1px;height:18px;background:#a0a0a0"></div>
<div class="t" style="left:172px;top:415px;color:#000;transform:scaleX(0.906);transform-origin:0 0">BSBWHS302A</div>
<div class="t" style="left:308px;top:415px;color:#000;transform:scaleX(0.971);transform-origin:0 0">Apply knowledge of WHS legislation in the workplace</div>
<div class="t" style="left:661px;top:415px;width:120px;text-align:right;color:#000">$0.00</div>
<div class="t" style="left:869px;top:415px;width:74px;text-align:right;color:#000">$0.00</div>
<svg class="a" style="left:821px;top:415px" width="11" height="11" viewBox="0 0 11 11"><rect x="0.5" y="0.5" width="10" height="10" fill="#fff" stroke="#000"/><path d="M2.5 5 L4.3 7.5 L8.5 2.8" fill="none" stroke="#000" stroke-width="1.8"/></svg>
<div class="a" style="left:159px;top:430px;width:11px;height:17px;background:linear-gradient(#b3ccf1 0px,#adc8ef 12px,#b2cbf0 13px,#9ab8e9 15px,#89aae1 17px)"></div>
<div class="a" style="left:159px;top:431px;width:1px;height:15px;background:#fff"></div>
<div class="a" style="left:159px;top:447px;width:12px;height:1px;background:#7096d4"></div>
<div class="a" style="left:170px;top:430px;width:1px;height:17px;background:#7096d4"></div>
<div class="a" style="left:171px;top:447px;width:776px;height:1px;background:#a0a0a0"></div>
<div class="a" style="left:306px;top:430px;width:1px;height:18px;background:#a0a0a0"></div>
<div class="a" style="left:661px;top:430px;width:1px;height:18px;background:#a0a0a0"></div>
<div class="a" style="left:783px;top:430px;width:1px;height:18px;background:#a0a0a0"></div>
<div class="a" style="left:869px;top:430px;width:1px;height:18px;background:#a0a0a0"></div>
<div class="a" style="left:946px;top:430px;width:1px;height:18px;background:#a0a0a0"></div>
<div class="t" style="left:172px;top:433px;color:#000;transform:scaleX(0.926);transform-origin:0 0">BSBWOR202A</div>
<div class="t" style="left:308px;top:433px;color:#000;transform:scaleX(0.979);transform-origin:0 0">Organise and complete daily work activities</div>
<div class="t" style="left:661px;top:433px;width:120px;text-align:right;color:#000">$0.00</div>
<div class="t" style="left:869px;top:433px;width:74px;text-align:right;color:#000">$0.00</div>
<svg class="a" style="left:821px;top:433px" width="11" height="11" viewBox="0 0 11 11"><rect x="0.5" y="0.5" width="10" height="10" fill="#fff" stroke="#000"/><path d="M2.5 5 L4.3 7.5 L8.5 2.8" fill="none" stroke="#000" stroke-width="1.8"/></svg>
<div class="a" style="left:159px;top:448px;width:11px;height:17px;background:linear-gradient(#b3ccf1 0px,#adc8ef 12px,#b2cbf0 13px,#9ab8e9 15px,#89aae1 17px)"></div>
<div class="a" style="left:159px;top:449px;width:1px;height:15px;background:#fff"></div>
<div class="a" style="left:159px;top:465px;width:12px;height:1px;background:#7096d4"></div>
<div class="a" style="left:170px;top:448px;width:1px;height:17px;background:#7096d4"></div>
<div class="a" style="left:171px;top:465px;width:776px;height:1px;background:#a0a0a0"></div>
<div class="a" style="left:306px;top:448px;width:1px;height:18px;background:#a0a0a0"></div>
<div class="a" style="left:661px;top:448px;width:1px;height:18px;background:#a0a0a0"></div>
<div class="a" style="left:783px;top:448px;width:1px;height:18px;background:#a0a0a0"></div>
<div class="a" style="left:869px;top:448px;width:1px;height:18px;background:#a0a0a0"></div>
<div class="a" style="left:946px;top:448px;width:1px;height:18px;background:#a0a0a0"></div>
<div class="t" style="left:172px;top:451px;color:#000;transform:scaleX(0.912);transform-origin:0 0">BSBWOR203B</div>
<div class="t" style="left:308px;top:451px;color:#000;transform:scaleX(1.022);transform-origin:0 0">Work effectively with others</div>
<div class="t" style="left:661px;top:451px;width:120px;text-align:right;color:#000">$0.00</div>
<div class="t" style="left:869px;top:451px;width:74px;text-align:right;color:#000">$0.00</div>
<svg class="a" style="left:821px;top:451px" width="11" height="11" viewBox="0 0 11 11"><rect x="0.5" y="0.5" width="10" height="10" fill="#fff" stroke="#000"/><path d="M2.5 5 L4.3 7.5 L8.5 2.8" fill="none" stroke="#000" stroke-width="1.8"/></svg>
<div class="a" style="left:159px;top:466px;width:11px;height:17px;background:linear-gradient(#b3ccf1 0px,#adc8ef 12px,#b2cbf0 13px,#9ab8e9 15px,#89aae1 17px)"></div>
<div class="a" style="left:159px;top:467px;width:1px;height:15px;background:#fff"></div>
<div class="a" style="left:159px;top:483px;width:12px;height:1px;background:#7096d4"></div>
<div class="a" style="left:170px;top:466px;width:1px;height:17px;background:#7096d4"></div>
<div class="a" style="left:171px;top:483px;width:776px;height:1px;background:#a0a0a0"></div>
<div class="a" style="left:306px;top:466px;width:1px;height:18px;background:#a0a0a0"></div>
<div class="a" style="left:661px;top:466px;width:1px;height:18px;background:#a0a0a0"></div>
<div class="a" style="left:783px;top:466px;width:1px;height:18px;background:#a0a0a0"></div>
<div class="a" style="left:869px;top:466px;width:1px;height:18px;background:#a0a0a0"></div>
<div class="a" style="left:946px;top:466px;width:1px;height:18px;background:#a0a0a0"></div>
<div class="t" style="left:172px;top:469px;color:#000;transform:scaleX(0.926);transform-origin:0 0">BSBWOR204A</div>
<div class="t" style="left:308px;top:469px;color:#000;transform:scaleX(0.957);transform-origin:0 0">Use Business Technology</div>
<div class="t" style="left:661px;top:469px;width:120px;text-align:right;color:#000">$0.00</div>
<div class="t" style="left:869px;top:469px;width:74px;text-align:right;color:#000">$0.00</div>
<svg class="a" style="left:821px;top:469px" width="11" height="11" viewBox="0 0 11 11"><rect x="0.5" y="0.5" width="10" height="10" fill="#fff" stroke="#000"/><path d="M2.5 5 L4.3 7.5 L8.5 2.8" fill="none" stroke="#000" stroke-width="1.8"/></svg>
<div class="a" style="left:159px;top:484px;width:11px;height:1px;background:#b2cbf0"></div>
<div class="a" style="left:947px;top:87px;width:17px;height:398px;background:#f0f0f0;border-left:1px solid #fff;border-top:1px solid #fff"></div>
<div class="a" style="left:948px;top:104px;width:15px;height:150px;background:#c8c8c8"></div>
<svg class="a" style="left:951px;top:92px" width="9" height="8" viewBox="0 0 9 8"><path d="M1.3 6.3 L4.5 2.9 L7.7 6.3" fill="none" stroke="#4a4a4a" stroke-width="2.3"/></svg>
<svg class="a" style="left:951px;top:473px" width="9" height="8" viewBox="0 0 9 8"><path d="M1.3 1.7 L4.5 5.1 L7.7 1.7" fill="none" stroke="#4a4a4a" stroke-width="2.3"/></svg>
</body></html>
